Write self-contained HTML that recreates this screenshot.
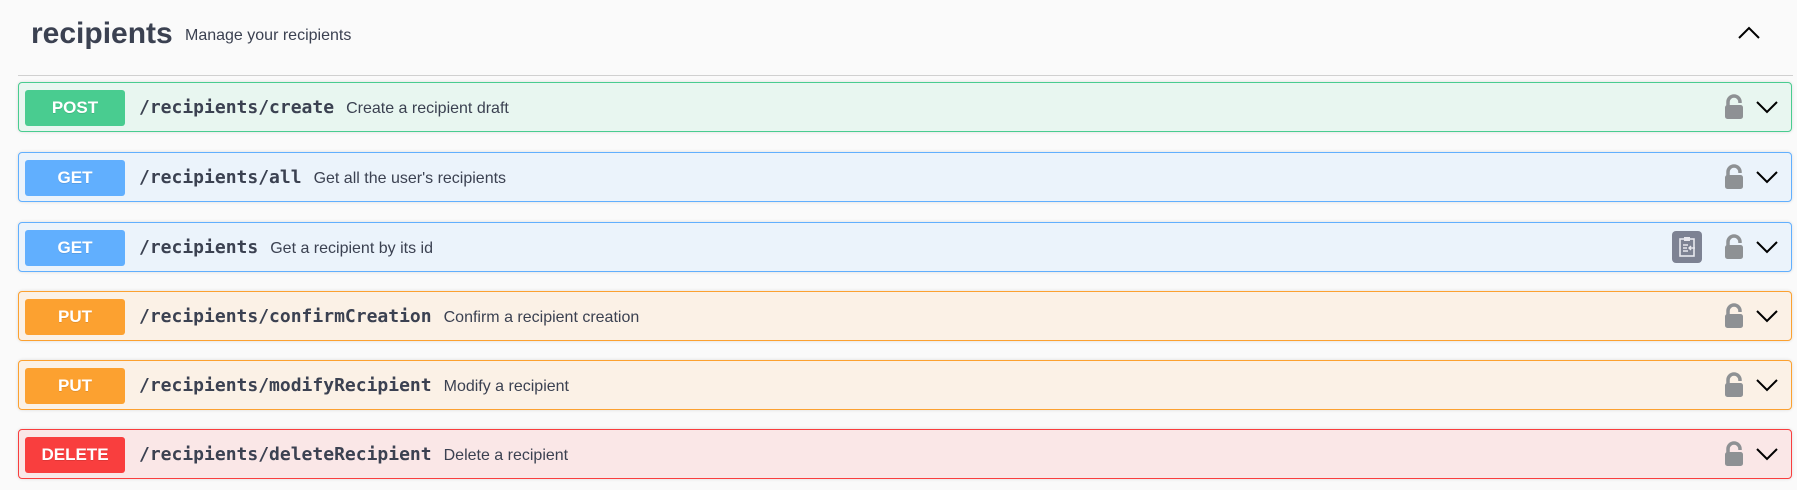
<!DOCTYPE html>
<html><head><meta charset="utf-8"><style>
html,body{margin:0;padding:0;background:#fafafa;width:1797px;height:490px;overflow:hidden;font-family:"Liberation Sans",Arial,sans-serif;color:#3b4151}
.title{position:absolute;left:31px;top:17px;font-size:30px;font-weight:bold;color:#3b4151}
.sub{position:absolute;left:185px;top:27px;font-size:16px;color:#3b4151}
.line{position:absolute;left:18px;top:75px;width:1775px;height:1px;background:#d0d0d0}
.row{position:absolute;left:18px;width:1772px;height:48px;border:1px solid;border-radius:4px;box-shadow:0 0 3px rgba(0,0,0,.12)}
.b{position:absolute;left:6px;top:7px;width:100px;height:36px;border-radius:3px;color:#fff;font-weight:bold;font-size:17px;line-height:36px;text-align:center;text-shadow:0 1px 0 rgba(0,0,0,.1)}
.p{position:absolute;left:120px;top:1px;line-height:48px;font-family:"DejaVu Sans Mono","Liberation Mono",monospace;font-weight:bold;font-size:18px;color:#3b4151}
.d{font-family:"Liberation Sans",Arial,sans-serif;font-weight:normal;font-size:16px;margin-left:12px}
.lock{position:absolute;left:1704px;top:11px}
.chev{position:absolute;left:1736px;top:17px}
.post{border-color:#49cc90;background:#e8f6f0}.post .b{background:#49cc90}
.get{border-color:#61affe;background:#ebf3fb}.get .b{background:#61affe}
.put{border-color:#fca130;background:#fbf1e6}.put .b{background:#fca130}
.del{border-color:#f93e3e;background:#fae7e7}.del .b{background:#f93e3e}
.copy{position:absolute;left:1653px;top:8px;width:30px;height:32px;background:#7d8293;border-radius:4px}
</style></head><body>
<div class="title">recipients</div>
<div class="sub">Manage your recipients</div>
<svg style="position:absolute;left:1737px;top:25px" width="24" height="15" viewBox="0 0 24 15"><path d="M2 13 L12 3 L22 13" fill="none" stroke="#000" stroke-width="2"/></svg>
<div class="line"></div>

<div class="row post" style="top:82px"><div class="b">POST</div><div class="p">/recipients/create<span class="d">Create a recipient draft</span></div>LOCK</div>
<div class="row get" style="top:152px"><div class="b">GET</div><div class="p">/recipients/all<span class="d">Get all the user's recipients</span></div>LOCK</div>
<div class="row get" style="top:222px"><div class="b">GET</div><div class="p">/recipients<span class="d">Get a recipient by its id</span></div><div class="copy"><svg width="30" height="32" viewBox="0 0 30 32"><rect x="8" y="8" width="14" height="17" fill="none" stroke="#e8e8ee" stroke-width="1.6"/><rect x="12" y="6" width="6" height="4" fill="#e8e8ee"/><path d="M11 14h5M11 17h4M11 20h5M23 17h-6M19 15l-2 2 2 2" stroke="#e8e8ee" stroke-width="1.4" fill="none"/></svg></div>LOCK</div>
<div class="row put" style="top:291px"><div class="b">PUT</div><div class="p">/recipients/confirmCreation<span class="d">Confirm a recipient creation</span></div>LOCK</div>
<div class="row put" style="top:360px"><div class="b">PUT</div><div class="p">/recipients/modifyRecipient<span class="d">Modify a recipient</span></div>LOCK</div>
<div class="row del" style="top:429px"><div class="b">DELETE</div><div class="p">/recipients/deleteRecipient<span class="d">Delete a recipient</span></div>LOCK</div>

<script>
document.querySelectorAll('.row').forEach(function(r){
 r.innerHTML=r.innerHTML.replace('LOCK','<svg class="lock" width="22" height="26" viewBox="0 0 22 26"><path d="M5 12 V8 a6 6 0 0 1 12 0 V9" fill="none" stroke="#8e9194" stroke-width="3.5"/><rect x="2" y="11" width="18" height="14" rx="2.5" fill="#8e9194"/></svg><svg class="chev" width="24" height="14" viewBox="0 0 24 14"><path d="M2 2 L12 12 L22 2" fill="none" stroke="#000" stroke-width="2"/></svg>');
});
</script>
</body></html>
